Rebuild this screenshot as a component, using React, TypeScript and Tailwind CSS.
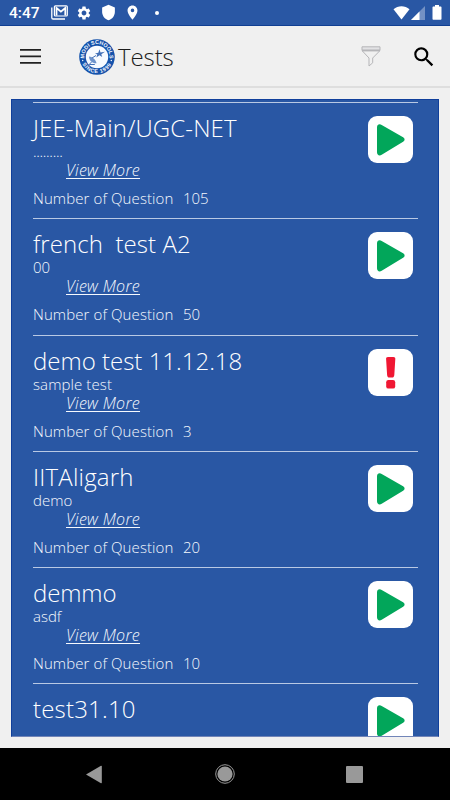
import { MdSearch, MdSettings, MdLocationOn, MdShield } from "react-icons/md";
import clsx from "clsx";

type Test = {
    name: string;
    description: string;
    questions?: number;
    locked?: boolean;
    nameClass?: string;
    descriptionClass?: string;
};

const tests: Test[] = [
    { name: "JEE-Main/UGC-NET", description: ".........", questions: 105, nameClass: "tracking-[0.12px]", descriptionClass: "tracking-[-0.3px]" },
    { name: "french  test A2", description: "00", questions: 50, nameClass: "tracking-[0.07px]" },
    { name: "demo test 11.12.18", description: "sample test", questions: 3, locked: true, descriptionClass: "tracking-[0.1px]" },
    { name: "IITAligarh", description: "demo", questions: 20, nameClass: "tracking-[0.2px]" },
    { name: "demmo", description: "asdf", questions: 10, nameClass: "tracking-[-0.1px]" },
    { name: "test31.10", description: ".....", nameClass: "tracking-[0.2px]", descriptionClass: "tracking-[-0.3px]" },
];

function StatusBar() {
    return (
        <div className="flex h-[26px] shrink-0 items-center border-b border-[#103f92] bg-[#2957a4] pl-[9px] pr-[8px] text-white">
            <span className="mt-[3px] w-[42px] font-['Roboto'] text-[15.5px] font-medium leading-none">4:47</span>
            <svg className="h-[15px] w-[17px]" viewBox="0 0 17 15" fill="none">
                <path d="M.8 2.500v10.200c0 .7.500 1.300 1.300 1.300H14" stroke="white" strokeWidth="1.300" />
                <rect x="3.400" y=".8" width="12.900" height="10.200" rx="1" stroke="white" strokeWidth="1.200" />
                <path d="M5.500 10.500V3l4.400 3.600L14.300 3v7.500" stroke="white" strokeWidth="1.800" />
            </svg>
            <MdSettings className="ml-[8px] size-[16px]" />
            <MdShield className="ml-[8px] size-[17px]" />
            <MdLocationOn className="ml-[7px] size-[17px]" />
            <span className="ml-[14px] size-[4px] rounded-full bg-white" />
            <svg className="ml-auto h-[14px] w-[17px]" viewBox="0 0 17 14">
                <path d="M.5 3.300C5-.8 12-.8 16.500 3.300L8.500 13.500Z" fill="white" />
            </svg>
            <svg className="ml-[1px] h-[14px] w-[14px]" viewBox="0 0 14 14">
                <path d="M0 14 14 0v14Z" fill="#7391c4" />
                <path d="M0 14 8.500 5.500V14Z" fill="white" />
            </svg>
            <svg className="ml-[7px] h-[15px] w-[10px]" viewBox="0 0 10 15">
                <path d="M3 0h4v1.500h1.500c.6 0 1 .4 1 1v11.200c0 .6-.4 1-1 1h-7c-.6 0-1-.4-1-1V2.500c0-.6.400-1 1-1H3Z" fill="white" />
            </svg>
        </div>
    );
}

function Logo() {
    return (
        <svg className="size-[36px]" viewBox="0 0 36 36">
            <defs>
                <path id="logo-top" d="M5.800 21A12.600 12.600 0 1 1 30.200 21" />
                <path id="logo-bottom" d="M1.800 18A16.200 16.200 0 0 0 34.200 18" />
            </defs>
            <circle cx="18" cy="18" r="17.800" fill="#1552ab" />
            <circle cx="18" cy="18" r="11.200" fill="#f7faff" />
            <text fill="#f4f8ff" className="font-['Liberation_Sans'] text-[5.4px] font-bold">
                <textPath href="#logo-top" startOffset="50%" textAnchor="middle">MODI SCHOOLS</textPath>
            </text>
            <text fill="#f4f8ff" className="font-['Liberation_Sans'] text-[5.4px] font-bold tracking-[0.6px]">
                <textPath href="#logo-bottom" startOffset="50%" textAnchor="middle">SINCE 1999</textPath>
            </text>
            <circle cx="3.700" cy="21.500" r=".7" fill="white" />
            <circle cx="32.300" cy="21.500" r=".7" fill="white" />
            <path d="M10 17.500c3 0 7 3 7.500 6.800-3.800.4-7.400-2.300-7.500-6.800Z" fill="#6d92cb" />
            <path d="m12.500 23-2.300 2.500h5.600M13 19l4-2.500" stroke="#416fb7" strokeWidth="1" fill="none" />
            <path d="m16 14.500 3.300-.7 1.200-3.600 1 3.300 4.500-.8-3.700 2.500.9 2.800-2.700-1.700-3.200 2.200 1-3Z" fill="#416fb7" />
        </svg>
    );
}

function Header() {
    return (
        <header className="flex h-[62px] shrink-0 items-center border-b-2 border-[#dedede] bg-[#f0f0f0] pl-[20px] pr-[13px] pt-[1px]">
            <svg className="h-[15px] w-[21px]" viewBox="0 0 21 15" fill="#222">
                <path d="M0 0h21v1.800H0ZM0 6.500h21v1.800H0ZM0 13h21v1.800H0Z" />
            </svg>
            <div className="ml-[38px]">
                <Logo />
            </div>
            <h1 className="ml-[3px] text-[24px] font-light leading-none tracking-[-0.1px] text-[#1c1c1c]">Tests</h1>
            <svg className="ml-auto h-[21px] w-[20px]" viewBox="0 0 20 21" fill="none" stroke="#b5b5b8" strokeWidth="1">
                <path d="M1 .8h18v3.500H1Z" fill="#e2e2e4" />
                <path d="M1.200 4.800 8 12v8l3.700-3.200V12l7.100-7.200Z" />
                <path d="M1 4.400h18" strokeWidth="1.500" />
            </svg>
            <MdSearch className="ml-[30px] size-[26px] text-black" />
        </header>
    );
}

function StatusButton({ locked }: { locked?: boolean }) {
    return (
        <button className="h-[47px] w-[45px] shrink-0 rounded-[9px] bg-white">
            <svg className="h-full w-full" viewBox="0 0 45 47">
                {locked ? (
                    <g fill="#f01733">
                        <path d="M20 8h5.400c1.300 0 2 .7 1.900 1.900L26.300 26c-.1 1.700-1 2.600-2.300 2.600h-2.600c-1.300 0-2.200-.9-2.300-2.600L18.100 9.900C18 8.700 18.700 8 20 8Z" />
                        <rect x="18.200" y="31" width="9" height="8.600" rx="2.200" />
                    </g>
                ) : (
                    <path d="M9 11.500c0-2.800 2.300-4 4.700-2.500l21.400 12.200c2 1.200 2 3.400 0 4.600L13.700 38.800C11.300 40.300 9 39.100 9 36.300Z" fill="#02a65a" />
                )}
            </svg>
        </button>
    );
}

function TestRow({ test }: { test: Test }) {
    return (
        <li className="flex h-[116.25px] shrink-0 justify-between border-t border-[#b9c9e4] pr-[5px] pt-[13px]">
            <div className="-mt-[2px] whitespace-pre font-light text-[#f6f9fe]">
                <h2 className={clsx("h-[28px] text-[24px] leading-[27px] text-white", test.nameClass)}>{test.name}</h2>
                <p className={clsx("h-[18px] text-[15px] leading-[18px]", test.descriptionClass)}>{test.description}</p>
                {test.questions !== undefined && (
                    <>
                        <a className="ml-[33px] block h-[19px] w-max text-[16px] italic leading-[20px] tracking-[0.3px] underline underline-offset-2">View More</a>
                        <p className="mt-[9px] flex text-[15px] leading-[20px]">
                            <span className="w-[150px] tracking-[0.1px]">Number of Question</span>
                            <span>{test.questions}</span>
                        </p>
                    </>
                )}
            </div>
            <StatusButton locked={test.locked} />
        </li>
    );
}

function NavBar() {
    return (
        <nav className="flex h-[52px] shrink-0 items-center justify-between bg-black pl-[85px] pr-[87px]">
            <svg className="h-[19px] w-[18px]" viewBox="0 0 18 19" fill="#999">
                <path d="M1 9.500 16 .8c.4-.2.800 0 .8.400v16.600c0 .4-.4.600-.8.400Z" />
            </svg>
            <svg className="size-[20px]" viewBox="0 0 20 20">
                <circle cx="10" cy="10" r="9.300" fill="none" stroke="#999" strokeWidth="1" />
                <circle cx="10" cy="10" r="7.600" fill="#999" />
            </svg>
            <span className="size-[17px] rounded-[1px] bg-[#999]" />
        </nav>
    );
}

export default function App() {
    return (
        <div className="flex h-[800px] w-[450px] flex-col overflow-hidden bg-[#f0f0f0] font-['Open_Sans','Noto_Sans',sans-serif]">
            <StatusBar />
            <Header />
            <main className="mx-[11px] mb-[11px] mt-[11px] min-h-0 flex-1 overflow-hidden border border-b-[#7185b8] border-l-[#103f9b] border-r-[#103f9b] border-t-[#103f9b] bg-[#2957a4] pl-[21px] pr-[20px] pt-[2px]">
                <ul className="flex flex-col">
                    {tests.map((test) => (
                        <TestRow key={test.name} test={test} />
                    ))}
                </ul>
            </main>
            <NavBar />
        </div>
    );
}
